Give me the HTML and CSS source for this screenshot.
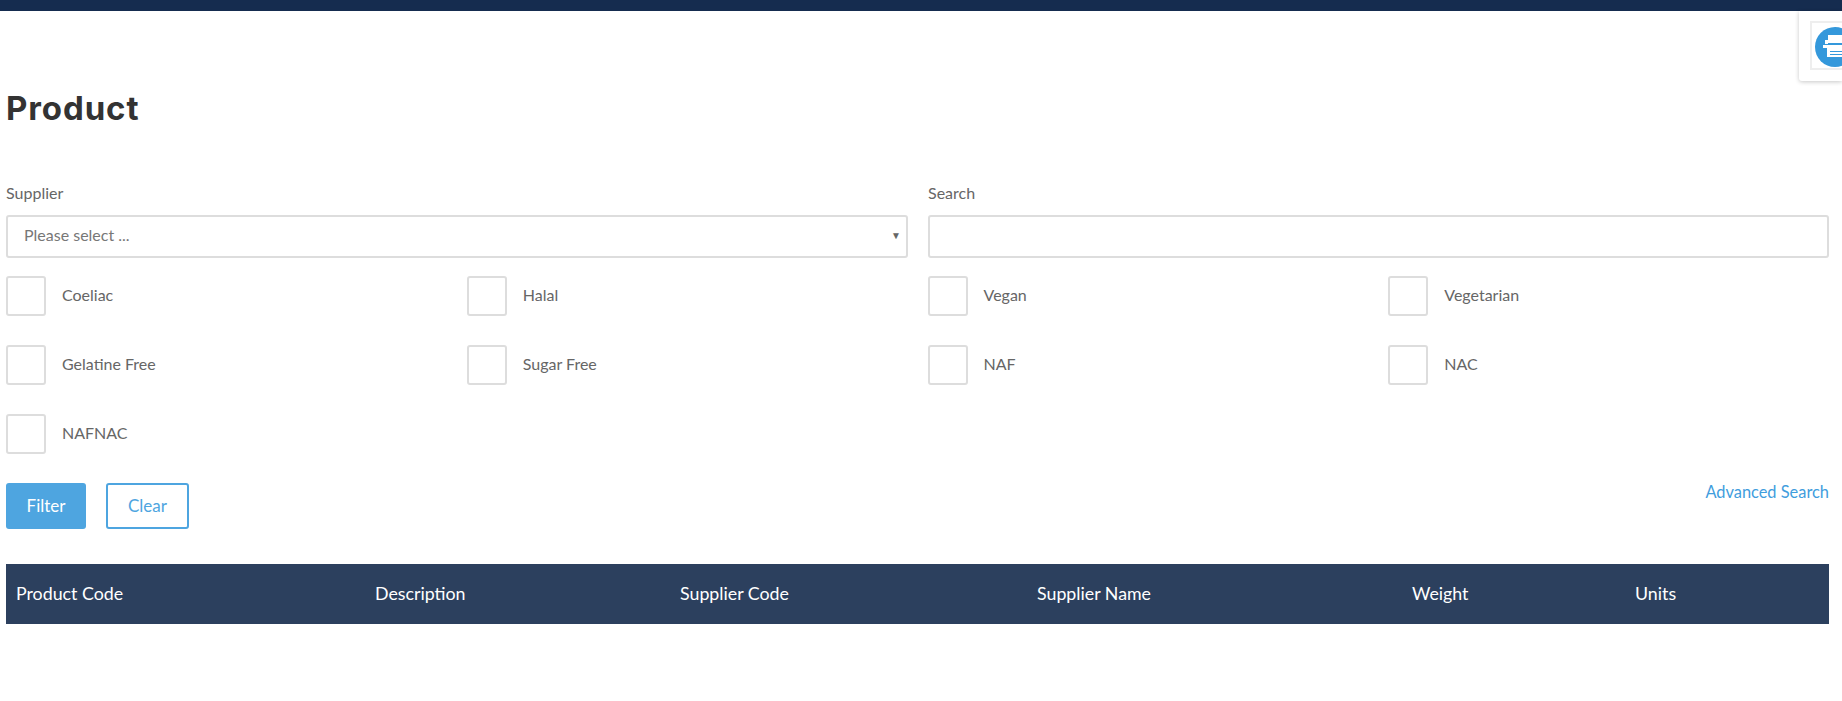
FILE: index.html
```html
<!DOCTYPE html>
<html lang="en">
<head>
<meta charset="utf-8">
<title>Product</title>
<link rel="stylesheet" href="styles.css">
</head>
<body>
<div class="topbar"></div>
<aside class="print-tab">
  <div class="print-frame">
    <svg class="print-icon" width="40" height="40" viewBox="0 0 40 40">
      <circle cx="20" cy="20" r="20" fill="#3498db"/>
      <rect x="13" y="8" width="16" height="8" fill="#fff"/>
      <rect x="10" y="13" width="3" height="4" fill="#fff"/>
      <rect x="8" y="18" width="25" height="3" fill="#fff"/>
      <rect x="12" y="21" width="21" height="9" fill="#fff"/>
      <rect x="15" y="24" width="14" height="1" fill="#3498db"/>
      <rect x="15" y="27" width="14" height="1" fill="#3498db"/>
    </svg>
  </div>
</aside>
<main class="page">
  <h1 class="title">Product</h1>
  <div class="fields">
    <div class="field">
      <label class="field-label">Supplier</label>
      <div class="select"><span>Please select ...</span><span class="caret">▼</span></div>
    </div>
    <div class="field">
      <label class="field-label">Search</label>
      <div class="input"></div>
    </div>
  </div>
  <div class="checks">
    <div class="check"><span class="box"></span><span>Coeliac</span></div>
    <div class="check"><span class="box"></span><span>Halal</span></div>
    <div class="check"><span class="box"></span><span>Vegan</span></div>
    <div class="check"><span class="box"></span><span>Vegetarian</span></div>
    <div class="check"><span class="box"></span><span>Gelatine Free</span></div>
    <div class="check"><span class="box"></span><span>Sugar Free</span></div>
    <div class="check"><span class="box"></span><span>NAF</span></div>
    <div class="check"><span class="box"></span><span>NAC</span></div>
    <div class="check"><span class="box"></span><span>NAFNAC</span></div>
  </div>
  <div class="actions">
    <div class="buttons">
      <button class="btn btn-primary">Filter</button>
      <button class="btn btn-outline">Clear</button>
    </div>
    <a class="advanced">Advanced Search</a>
  </div>
  <div class="table-head">
    <span class="th th-code">Product Code</span>
    <span class="th th-desc">Description</span>
    <span class="th th-scode">Supplier Code</span>
    <span class="th th-sname">Supplier Name</span>
    <span class="th th-weight">Weight</span>
    <span class="th th-units">Units</span>
  </div>
</main>
</body>
</html>
```

FILE: styles.css
```css
* { box-sizing: border-box; }
html, body { margin: 0; padding: 0; }
body {
  height: 701px;
  overflow: hidden;
  background: #fff;
  color: #666;
  font-family: "Lato", "Open Sans", sans-serif;
  font-size: 16px;
  position: relative;
}
.topbar { height: 11px; background: #152c4f; }
.print-tab {
  position: absolute;
  top: 11px;
  right: 0;
  width: 43px;
  height: 70px;
  background: #fff;
  border-radius: 0 0 0 3px;
  box-shadow: 0 1px 4px rgba(0,0,0,.22);
  padding: 10px 0 0 11px;
  overflow: hidden;
}
.print-frame {
  width: 40px;
  height: 49px;
  border: 2px solid #eee;
  border-right: 0;
  padding: 4px 0 0 3px;
  overflow: hidden;
}
.print-icon { display: block; }
.page { padding: 0 13px 0 6px; }
.title {
  margin: 0;
  padding-top: 77px;
  height: 171px;
  font-family: "Inter", sans-serif;
  font-size: 33px;
  line-height: 40px;
  font-weight: 700;
  letter-spacing: .9px;
  color: #333;
}
.fields { display: grid; grid-template-columns: 902px 901px; column-gap: 20px; }
.field-label { display: block; height: 33px; line-height: 22px; }
.select, .input {
  height: 43px;
  border: 2px solid #ddd;
  border-radius: 3px;
}
.select {
  display: flex;
  align-items: center;
  justify-content: space-between;
  padding: 0 5px 4px 16px;
  color: #777;
}
.caret { font-size: 10px; color: #666; }
.checks {
  display: grid;
  grid-template-columns: repeat(4, 440.75px);
  column-gap: 20px;
  row-gap: 29px;
  margin-top: 18px;
}
.check { display: flex; align-items: center; gap: 16px; height: 40px; padding-bottom: 3px; }
.box {
  width: 40px;
  height: 40px;
  flex: none;
  margin-bottom: -3px;
  border: 2px solid #ddd;
  border-radius: 3px;
}
.actions {
  display: flex;
  justify-content: space-between;
  margin-top: 29px;
}
.buttons { display: flex; gap: 20px; }
.btn {
  height: 46px;
  padding: 0 0 2px;
  border-radius: 3px;
  font-family: inherit;
  font-size: 17px;
}
.btn-primary { width: 80px; background: #4ea5e0; border: 0; color: #fff; }
.btn-outline { width: 83px; background: #fff; border: 2px solid #4ea5e0; color: #4ea5e0; }
.advanced { color: #3f9ddd; font-size: 16.4px; line-height: 18px; }
.table-head {
  display: grid;
  grid-template-columns: 359px 305px 357px 375px 223px 1fr;
  align-items: center;
  height: 60px;
  margin-top: 35px;
  background: #2c405e;
  color: #fff;
  padding: 0 0 2px 10px;
  font-size: 17.8px;
}
```
